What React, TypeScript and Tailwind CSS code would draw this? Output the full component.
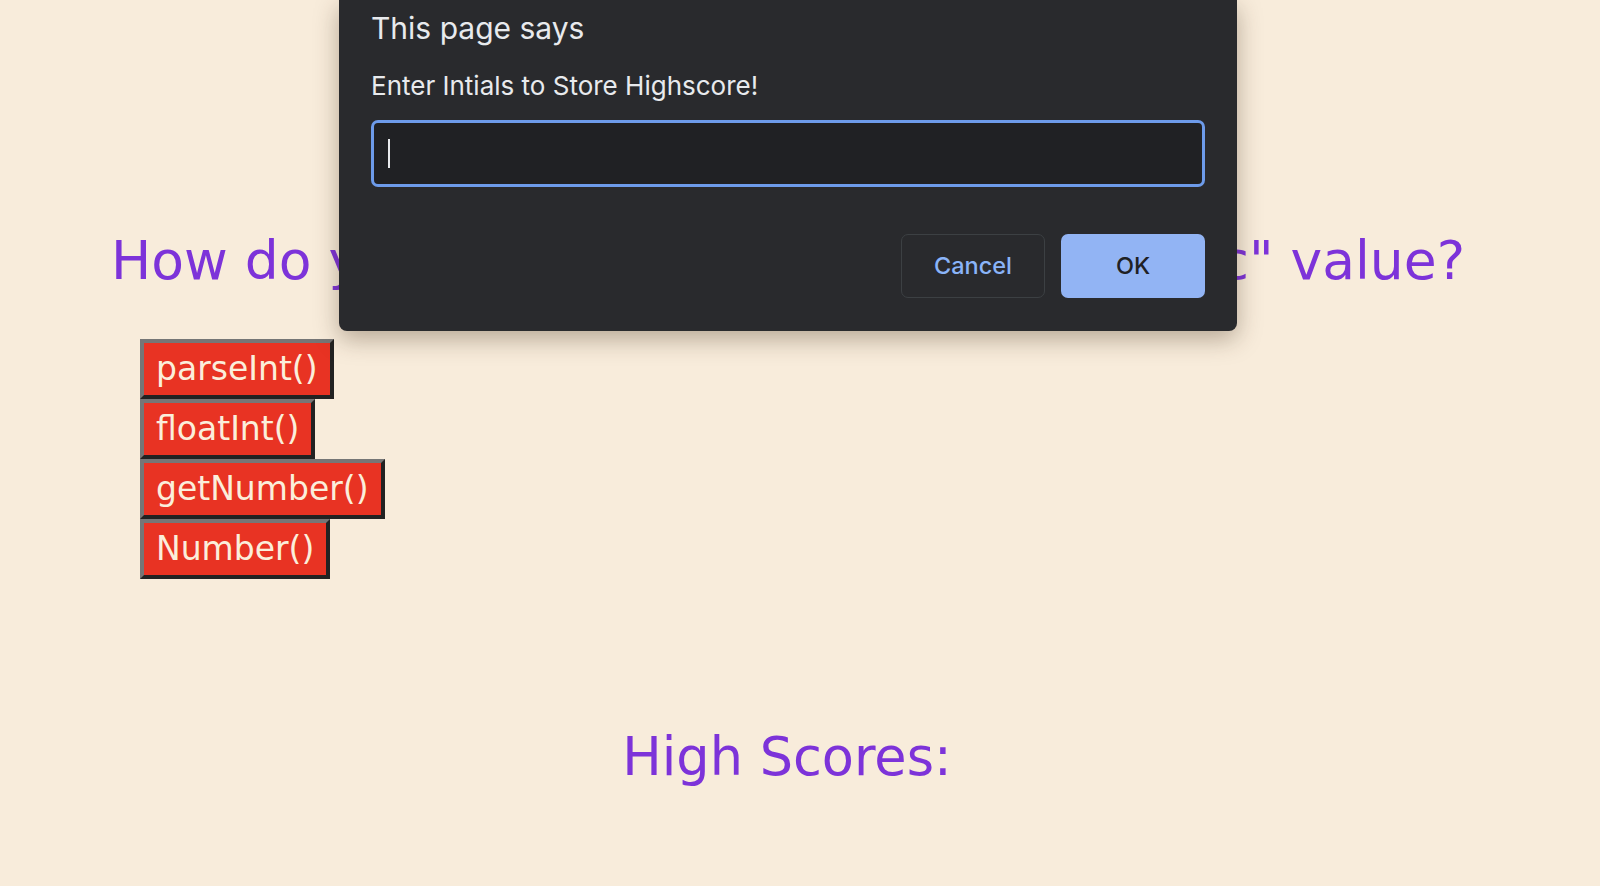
const answers = ["parseInt()", "floatInt()", "getNumber()", "Number()"];

function PromptDialog() {
  return (
    <div className="absolute left-[339px] top-0 w-[898px] rounded-b-[8px] bg-[#292a2d] px-[32px] pt-[8px] pb-[33px] shadow-[0_8px_24px_rgba(60,40,20,0.35)] font-['Inter',sans-serif]">
      <div className="text-[30px] leading-[40px] text-[#e8eaed]">This page says</div>
      <div className="mt-[21px] text-[26px] leading-[34px] text-[#e8eaed]">Enter Intials to Store Highscore!</div>
      <div className="mt-[17px] flex h-[67px] items-center rounded-[7px] border-[3px] border-[#6d9bea] bg-[#202124] px-[14px]">
        <div className="h-[29px] w-[2px] bg-[#e8eaed]" />
      </div>
      <div className="mt-[47px] flex justify-end gap-[16px]">
        <button className="h-[64px] w-[144px] rounded-[7px] border border-[#3c4043] text-[23.5px] font-medium text-[#8ab4f8]">
          Cancel
        </button>
        <button className="h-[64px] w-[144px] rounded-[7px] bg-[#92b4f4] text-[23.5px] font-medium text-[#202124]">
          OK
        </button>
      </div>
    </div>
  );
}

export default function App() {
  return (
    <div className="relative min-h-[886px] overflow-hidden bg-[#f8ecdb] font-['DejaVu_Sans',Verdana,sans-serif]">
      <div className="pr-[24px] pt-[230px]">
        <h2 className="text-center text-[53.5px] leading-[61px] text-[#7d33d9]">
          How do you convert a string to a "numeric" value?
        </h2>
      </div>
      <div className="mt-[48px] flex flex-col items-start pl-[140px]">
        {answers.map((a) => (
          <button
            key={a}
            className="h-[60px] border-4 border-t-[#767676] border-l-[#767676] border-b-[#222222] border-r-[#222222] bg-[#e83323] px-[12px] text-[33px] leading-[38px] text-[#fbeedb]"
          >
            {a}
          </button>
        ))}
      </div>
      <div className="pr-[26px] pt-[147px]">
        <h2 className="text-center text-[52.5px] leading-[61px] text-[#7d33d9]">High Scores:</h2>
      </div>
      <PromptDialog />
    </div>
  );
}
